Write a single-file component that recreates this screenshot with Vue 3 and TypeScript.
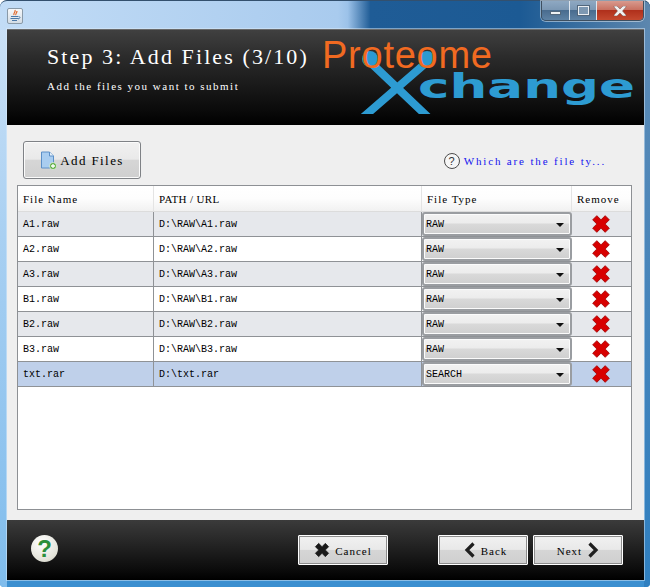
<script setup lang="ts">
interface Row { name: string; path: string; type: string; selected?: boolean }
const rows: Row[] = [
  { name: 'A1.raw', path: 'D:\\RAW\\A1.raw', type: 'RAW' },
  { name: 'A2.raw', path: 'D:\\RAW\\A2.raw', type: 'RAW' },
  { name: 'A3.raw', path: 'D:\\RAW\\A3.raw', type: 'RAW' },
  { name: 'B1.raw', path: 'D:\\RAW\\B1.raw', type: 'RAW' },
  { name: 'B2.raw', path: 'D:\\RAW\\B2.raw', type: 'RAW' },
  { name: 'B3.raw', path: 'D:\\RAW\\B3.raw', type: 'RAW' },
  { name: 'txt.rar', path: 'D:\\txt.rar', type: 'SEARCH', selected: true },
]
const crossPoints = '2,7 7,2 12,7 17,2 22,7 17,12 22,17 17,22 12,17 7,22 2,17 7,12'
</script>

<template>
  <div class="window">
    <div class="titlebar">
      <div class="app-icon">
        <svg width="14" height="14" viewBox="0 0 14 14">
          <path d="M7 1c1 2-2 3-1 5M9 2c0 2-2 3-1 4" fill="none" stroke="#e2682a" stroke-width="1.2" />
          <path d="M3 7.500h7M2.500 9.500h8M4 11.500h5" stroke="#4a78a8" stroke-width="1.1" />
          <path d="M10.500 7.500c2 0 2 2-.5 2.500" fill="none" stroke="#4a78a8" stroke-width="1" />
        </svg>
      </div>
      <div class="controls">
        <div class="ctl min"><span class="min-bar"></span></div>
        <div class="ctl max"><span class="max-box"></span></div>
        <div class="ctl close">
          <svg width="14" height="10" viewBox="0 0 14 10">
            <path d="M1 0h3l3 3 3-3h3v1L9.500 5 13 9v1h-3L7 7l-3 3H1V9l3.500-4L1 1z" fill="#f1f1f1" stroke="#6d5050" stroke-width=".5" />
          </svg>
        </div>
      </div>
    </div>

    <div class="client">
      <header class="header">
        <div class="heading">
          <h1>Step 3: Add Files (3/10)</h1>
          <p>Add the files you want to submit</p>
        </div>
        <div class="logo">
          <svg class="logo-x" width="140" height="84" viewBox="0 0 140 84">
            <path d="M47 32 108 90M104 32 37 90" stroke="#2d9bd2" stroke-width="8" fill="none" />
            <circle cx="47" cy="29" r="8" fill="#2a9ad2" />
            <circle cx="104" cy="29" r="8" fill="#2a9ad2" />
          </svg>
          <span class="proteome">Proteome</span>
          <span class="change">change</span>
        </div>
      </header>

      <main class="panel">
        <div class="toolbar">
          <button class="add-btn" type="button">
            <svg width="17" height="19" viewBox="0 0 17 19">
              <path d="M1.500 1h8l4 4v12h-12z" fill="#a9cdf0" stroke="#5c90c8" />
              <path d="M9.500 1v4h4" fill="#e8f2fb" stroke="#5c90c8" />
              <circle cx="13" cy="15" r="3.500" fill="#5fae45" stroke="#fff" stroke-width=".6" />
              <path d="M13 13v4M11 15h4" stroke="#fff" stroke-width="1.300" />
            </svg>
            <span>Add Files</span>
          </button>
          <div class="help-link">
            <span class="q-circle">?</span>
            <span class="link-text">Which are the file ty...</span>
          </div>
        </div>

        <div class="table">
          <div class="thead">
            <div class="th">File Name</div>
            <div class="th path-th">PATH / URL</div>
            <div class="th">File Type</div>
            <div class="th">Remove</div>
          </div>
          <div
            v-for="(r, i) in rows"
            :key="r.name"
            class="tr"
            :class="{ odd: i % 2 === 0, selected: r.selected }"
          >
            <div class="td">{{ r.name }}</div>
            <div class="td">{{ r.path }}</div>
            <div class="td combo-cell">
              <div class="combo">
                <span>{{ r.type }}</span>
                <i class="arrow"></i>
              </div>
            </div>
            <div class="td remove-cell">
              <svg width="20" height="20" viewBox="0 0 24 24">
                <polygon :points="crossPoints" fill="#d80000" stroke="#a00000" stroke-width="1" />
              </svg>
            </div>
          </div>
        </div>
      </main>

      <footer class="footer">
        <div class="help-ball">?</div>
        <div class="nav">
          <button class="btn cancel-btn" type="button">
            <svg width="16" height="16" viewBox="0 0 24 24">
              <polygon :points="crossPoints" fill="#1a1a1a" stroke="#1a1a1a" stroke-width="1" />
            </svg>
            <span>Cancel</span>
          </button>
          <div class="nav-right">
            <button class="btn back-btn" type="button">
              <svg width="12" height="16" viewBox="0 0 12 16"><path d="M9.500 1.500 3 8l6.500 6.500" fill="none" stroke="#1f1f1f" stroke-width="3.200" /></svg>
              <span>Back</span>
            </button>
            <button class="btn" type="button">
              <span>Next</span>
              <svg width="12" height="16" viewBox="0 0 12 16"><path d="M2.500 1.500 9 8l-6.500 6.500" fill="none" stroke="#1f1f1f" stroke-width="3.200" /></svg>
            </button>
          </div>
        </div>
      </footer>
    </div>
  </div>
</template>

<style>
html, body { margin: 0; background: #fff; overflow: hidden; }
</style>

<style scoped>
* { box-sizing: border-box; }
.window {
  width: 650px;
  height: 587px;
  padding: 0 6px 7px 7px;
  display: flex;
  flex-direction: column;
  font-family: "Liberation Serif", serif;
  font-size: 11px;
  letter-spacing: 1px;
  border-radius: 7px 7px 4px 4px;
  border-top: 1px solid #33506e;
  background:
    linear-gradient(90deg, #c2dcf6 0, #a9cbee 52%, #9cc2e9 53.500%, #1f5c96 57%, #1c5a94 80%, #5d87ae 100%) top/100% 29px no-repeat,
    linear-gradient(#cfe3f7 0, #a9d0f2 40%, #7fbcec 100%) left/7px 100% no-repeat,
    linear-gradient(180deg, #5f8bb5, #2f7fc0) right/6px 100% no-repeat,
    #3b8fd0;
}
.titlebar {
  height: 28px;
  flex: none;
  display: flex;
  justify-content: space-between;
  align-items: flex-start;
}
.app-icon {
  width: 16px;
  height: 16px;
  margin-top: 7px;
  border: 1px solid #8a9aa8;
  border-radius: 2px;
  background: linear-gradient(#f6f8fa, #d3dde6);
  display: flex;
  align-items: center;
  justify-content: center;
}
.controls {
  display: flex;
  height: 20px;
  margin-left: auto;
  border: 1px solid #3e4f60;
  border-top: none;
  border-radius: 0 0 5px 5px;
  overflow: hidden;
  box-shadow: 0 0 0 1px rgba(255,255,255,.45);
}
.ctl {
  display: flex;
  align-items: center;
  justify-content: center;
  border-right: 1px solid #dfe6ee;
}
.min, .max {
  width: 28px;
  background: linear-gradient(#8ea8c2 0, #7c98b4 45%, #496c8f 50%, #5e82a4 100%);
}
.max { width: 27px; }
.close {
  width: 46px;
  border-right: none;
  background: linear-gradient(#d89a8e 0, #c97262 45%, #b0301c 50%, #c4492f 100%);
}
.min-bar {
  width: 11px;
  height: 4px;
  margin-top: 5px;
  background: #eef1f4;
  border: 1px solid #52677c;
}
.max-box {
  width: 13px;
  height: 11px;
  border: 2px solid #eaeef2;
  outline: 1px solid #52677c;
  outline-offset: -1px;
  background: #7d98b2;
}
.client {
  flex: 1;
  display: flex;
  flex-direction: column;
  min-height: 0;
  box-shadow: 0 0 0 1px rgba(220,235,250,.5);
}
.header {
  height: 96px;
  flex: none;
  position: relative;
  display: flex;
  background: linear-gradient(#404040 0, #2a2a2a 30%, #0a0a0a 85%, #000 100%);
  border-top: 1px solid #6a6a6a;
}
.heading { padding: 15px 0 0 40px; color: #fff; }
.heading h1 {
  margin: 0;
  font-size: 22px;
  font-weight: 400;
  line-height: 24px;
  letter-spacing: 2.100px;
  white-space: nowrap;
}
.heading p {
  margin: 11px 0 0;
  font-size: 11px;
  line-height: 12px;
  letter-spacing: 1.500px;
  white-space: nowrap;
}
.logo {
  position: absolute;
  left: 316px;
  top: 0;
  width: 316px;
  height: 95px;
  font-family: "Liberation Sans", Arial, sans-serif;
  letter-spacing: 0;
}
.logo-x { position: absolute; left: 0; top: 0; }
.proteome {
  position: absolute;
  left: -1px;
  top: 7px;
  font-size: 38px;
  line-height: 36px;
  color: #f16a21;
  letter-spacing: .75px;
}
.change {
  position: absolute;
  left: 95px;
  top: 40px;
  font-family: "DejaVu Sans", sans-serif;
  font-size: 33px;
  line-height: 34px;
  font-weight: 700;
  color: #2d9bd2;
  transform: scaleX(1.610);
  transform-origin: left center;
}
.panel {
  flex: 1;
  min-height: 0;
  display: flex;
  flex-direction: column;
  padding: 16px 12px 10px 10px;
  background: #efefef;
}
.toolbar {
  height: 38px;
  flex: none;
  display: flex;
  align-items: center;
  justify-content: space-between;
  padding-left: 6px;
  margin-bottom: 6px;
}
.add-btn {
  width: 118px;
  height: 38px;
  display: flex;
  align-items: center;
  justify-content: center;
  gap: 3px;
  padding: 1px 0 0;
  border: 1px solid #7f8286;
  border-radius: 3px;
  background: linear-gradient(#f1f1f1 0, #e9e9e9 48%, #d6d6d6 50%, #cfcfcf 100%);
  font: inherit;
  font-size: 13px;
  letter-spacing: 1.400px;
  color: #000;
  box-shadow: inset 0 0 0 1px #fbfbfb;
}
.help-link {
  display: flex;
  align-items: center;
  gap: 4px;
  margin-right: 26px;
  margin-top: 1px;
}
.q-circle {
  width: 16px;
  height: 16px;
  border: 1px solid #4b4b4b;
  border-radius: 50%;
  display: flex;
  align-items: center;
  justify-content: center;
  font-family: "Liberation Sans", sans-serif;
  font-size: 11px;
  letter-spacing: 0;
  color: #333;
  background: #f6f6f6;
}
.link-text { color: #1414ee; white-space: nowrap; letter-spacing: 1.850px; }
.table {
  flex: 1;
  min-height: 0;
  border: 1px solid #8d9094;
  background: #fff;
}
.thead, .tr {
  display: grid;
  grid-template-columns: 136px 268px 150px 1fr;
}
.thead { height: 26px; }
.th {
  display: flex;
  align-items: center;
  padding: 1px 0 0 5px;
  color: #000;
  background: linear-gradient(#fff 0, #fdfdfd 50%, #f1f1f1 100%);
  border-right: 1px solid #e4e4e4;
  border-bottom: 1px solid #dcdcdc;
}
.path-th { letter-spacing: .35px; }
.th:last-child { border-right: none; }
.tr {
  height: 25px;
  background: #fff;
  border-bottom: 1px solid #8f9296;
  font-family: "Liberation Mono", monospace;
  font-size: 10px;
  letter-spacing: 0;
}
.tr.odd { background: #e6e8ec; }
.tr.selected { background: #bfd0ea; }
.td {
  display: flex;
  align-items: center;
  padding: 0 0 0 5px;
  color: #000;
  border-right: 1px solid #8f9296;
}
.td:last-child { border-right: none; }
.combo-cell { padding: 0; border-right: none; }
.combo {
  width: 100%;
  height: 24px;
  display: flex;
  align-items: center;
  justify-content: space-between;
  padding: 1px 6px 0 2px;
  border: 2px solid #9a9da1;
  border-radius: 3px;
  background: linear-gradient(#f2f2f2 0, #ececec 45%, #d9d9d9 50%, #cfcfcf 100%);
  box-shadow: inset 0 0 0 1px #fbfbfb;
}
.arrow {
  width: 0;
  height: 0;
  border-left: 4px solid transparent;
  border-right: 4px solid transparent;
  border-top: 4px solid #111;
}
.remove-cell { justify-content: center; padding: 0 2px 0 0; }
.footer {
  height: 60px;
  flex: none;
  display: flex;
  align-items: center;
  padding: 0 21px 0 24px;
  background: linear-gradient(#3b3b3b 0, #2a2a2a 30%, #0a0a0a 85%, #000 100%);
}
.help-ball {
  width: 27px;
  height: 27px;
  flex: none;
  margin-bottom: 4px;
  border-radius: 50%;
  background: radial-gradient(circle at 40% 30%, #fff, #e2e2d8 70%, #b8b8ae);
  color: #2b8f3a;
  font-family: "Liberation Sans", sans-serif;
  font-size: 24px;
  font-weight: 700;
  line-height: 27px;
  letter-spacing: 0;
  text-align: center;
}
.nav {
  flex: 1;
  display: flex;
  justify-content: space-between;
  margin-left: 240px;
}
.nav-right { display: flex; gap: 5px; }
.btn {
  width: 90px;
  height: 30px;
  display: flex;
  align-items: center;
  justify-content: center;
  gap: 5px;
  padding: 2px 0 0;
  border: 1px solid #fff;
  background: linear-gradient(#f1f1f1 0, #e9e9e9 48%, #d6d6d6 50%, #cfcfcf 100%);
  box-shadow: inset 0 0 0 1px #8d8d8d;
  border-radius: 1px;
  font: inherit;
  letter-spacing: 1px;
  color: #000;
}
.back-btn { padding-left: 5px; }
.btn svg { margin-top: -2px; }
</style>
